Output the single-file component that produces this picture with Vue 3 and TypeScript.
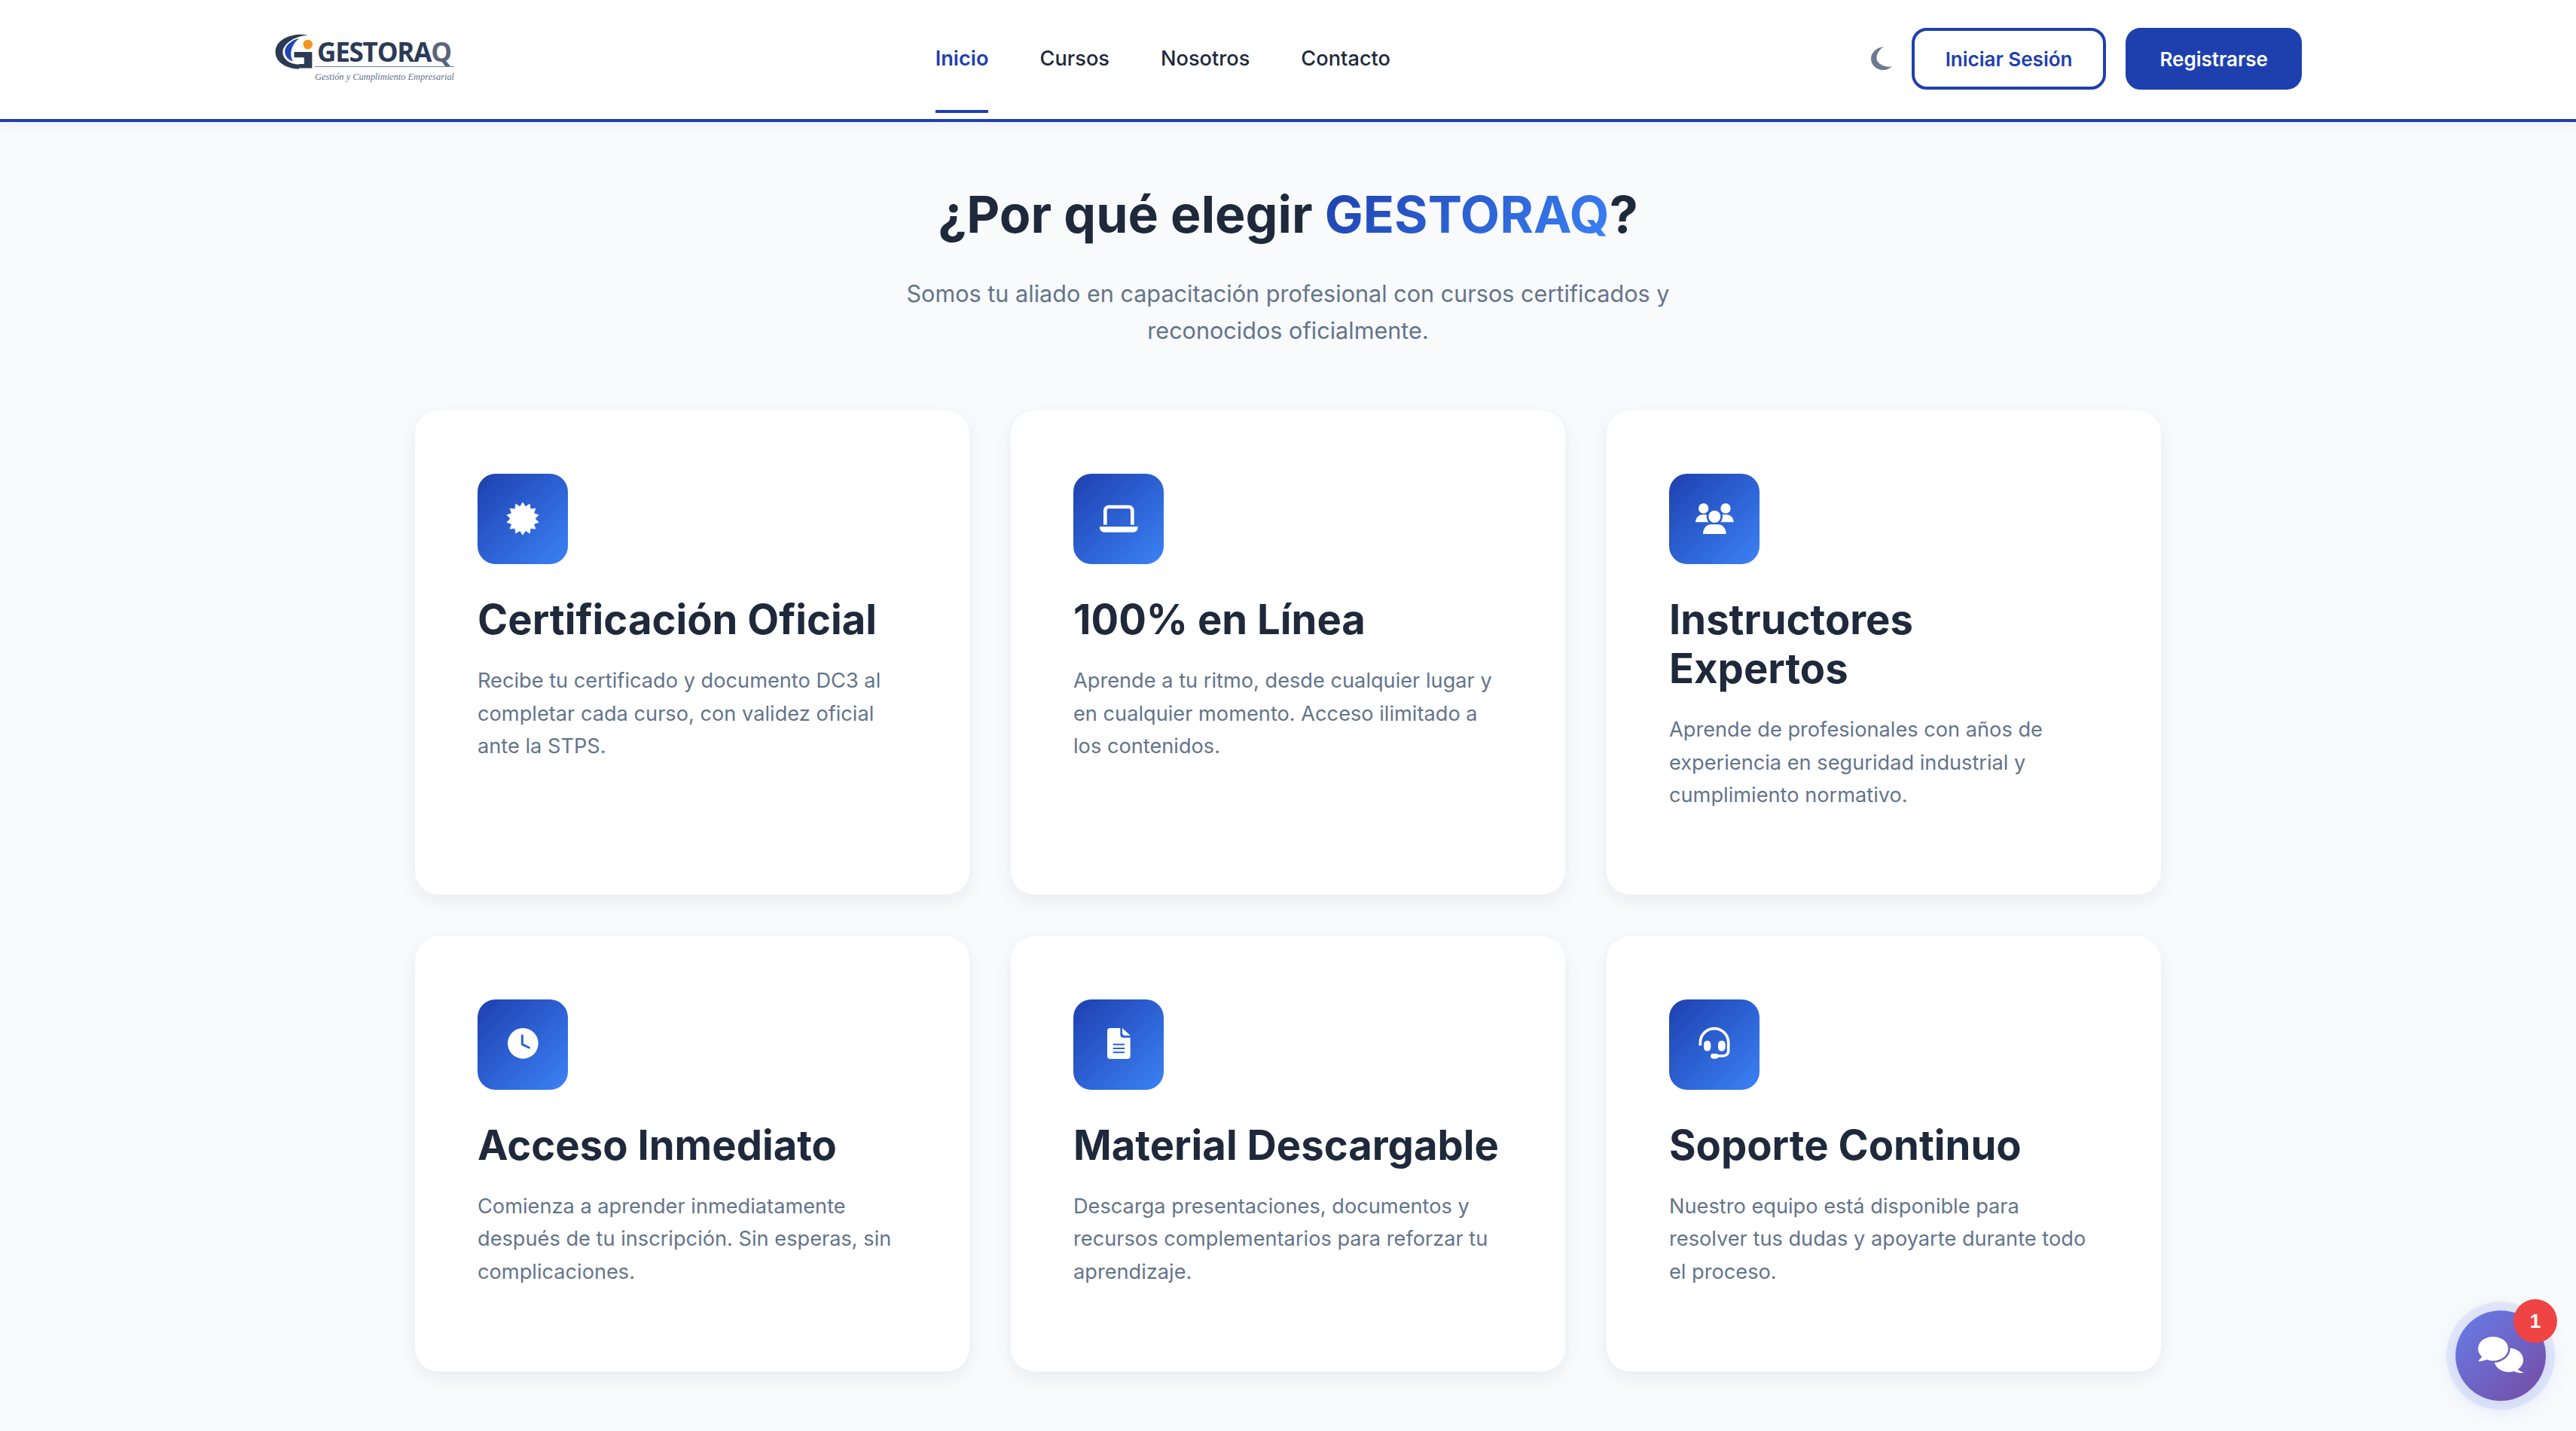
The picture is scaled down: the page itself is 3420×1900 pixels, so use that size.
<script setup lang="ts">
  type Feature = { icon: string; title: string; text: string };

  const links = ['Inicio', 'Cursos', 'Nosotros', 'Contacto'];

  const features: Feature[] = [
    {
      icon: 'certificate',
      title: 'Certificación Oficial',
      text: 'Recibe tu certificado y documento DC3 al completar cada curso, con validez oficial ante la STPS.',
    },
    {
      icon: 'laptop',
      title: '100% en Línea',
      text: 'Aprende a tu ritmo, desde cualquier lugar y en cualquier momento. Acceso ilimitado a los contenidos.',
    },
    {
      icon: 'users',
      title: 'Instructores Expertos',
      text: 'Aprende de profesionales con años de experiencia en seguridad industrial y cumplimiento normativo.',
    },
    {
      icon: 'clock',
      title: 'Acceso Inmediato',
      text: 'Comienza a aprender inmediatamente después de tu inscripción. Sin esperas, sin complicaciones.',
    },
    {
      icon: 'file',
      title: 'Material Descargable',
      text: 'Descarga presentaciones, documentos y recursos complementarios para reforzar tu aprendizaje.',
    },
    {
      icon: 'headset',
      title: 'Soporte Continuo',
      text: 'Nuestro equipo está disponible para resolver tus dudas y apoyarte durante todo el proceso.',
    },
  ];

  // seal outline for the certificate icon
  const sealPoints = Array.from({ length: 28 }, (_, i) => {
    const r = i % 2 === 0 ? 65 : 49;
    const a = (i * Math.PI) / 14 - Math.PI / 2;
    return `${(180 + r * Math.cos(a)).toFixed(1)},${(179 + r * Math.sin(a)).toFixed(1)}`;
  }).join(' ');
</script>

<template>
  <div class="page">
    <header class="header">
      <a class="logo">
        <svg class="logo-mark" viewBox="70 65 160 150" width="53" height="50">
          <path d="M205 72C150 62 75 85 75 140C75 185 125 208 170 208L170 190C130 190 100 165 105 135C110 105 150 78 205 72Z" fill="#2b3a55" />
          <path d="M170 85C135 95 105 120 115 150C120 165 130 172 145 178C130 150 135 115 170 85Z" fill="#1f46b5" />
          <path d="M150 140H222V205H170V188H190V162H150Z" fill="#2b3a55" />
          <circle cx="205" cy="110" r="19" fill="#f7941d" />
        </svg>
        <div class="logo-words">
          <div class="logo-name">GESTORA<span class="logo-q">Q</span></div>
          <div class="logo-tag">Gestión y Cumplimiento Empresarial</div>
        </div>
      </a>

      <nav class="nav">
        <a v-for="(link, i) in links" :key="link" class="nav-link" :class="{ active: i === 0 }">{{ link }}</a>
      </nav>

      <div class="actions">
        <svg class="moon" viewBox="0 0 28 32" width="28" height="32">
          <path d="M17 1C7 2 0 9 0 17C0 25 7 32 16 32C21 32 25 30 28 27C25 28 22 28 19 27C12 25 7 21 7.500 15C8 9 12 4 17 1Z" fill="#6b7a90" />
        </svg>
        <button class="btn btn-outline">Iniciar Sesión</button>
        <button class="btn btn-solid">Registrarse</button>
      </div>
    </header>

    <main class="features">
      <h2 class="title">¿Por qué elegir <span class="brand">GESTORAQ</span>?</h2>
      <p class="subtitle">Somos tu aliado en capacitación profesional con cursos certificados y reconocidos oficialmente.</p>

      <div class="grid">
        <article v-for="item in features" :key="item.title" class="card">
          <div class="card-icon">
            <svg viewBox="0 0 360 360" width="120" height="120">
              <polygon v-if="item.icon === 'certificate'" :points="sealPoints" fill="#fff" stroke="#fff" stroke-width="2" stroke-linejoin="round" />

              <g v-else-if="item.icon === 'laptop'">
                <path d="M127 203V146a14 14 0 0 1 14-14H221a14 14 0 0 1 14 14V203" fill="none" stroke="#fff" stroke-width="14" />
                <path d="M105 211H257V215a18 18 0 0 1-18 18H123a18 18 0 0 1-18-18Z" fill="#fff" />
              </g>

              <g v-else-if="item.icon === 'users'">
                <mask id="users-cut">
                  <rect width="360" height="360" fill="#fff" />
                  <circle cx="181" cy="171" r="32" fill="#000" />
                  <path d="M127 248V232c0-22 18-38 38-38H197c20 0 38 16 38 38v16Z" fill="#000" />
                </mask>
                <g mask="url(#users-cut)" fill="#fff">
                  <circle cx="137" cy="138" r="20" />
                  <circle cx="225" cy="138" r="20" />
                  <path d="M105 193c0-16 12-30 28-30h12c16 0 28 14 28 30Z" />
                  <path d="M189 193c0-16 12-30 28-30h12c16 0 28 14 28 30Z" />
                </g>
                <circle cx="181" cy="171" r="24" fill="#fff" />
                <path d="M135 240c0-22 14-38 32-38h28c18 0 32 16 32 38Z" fill="#fff" />
              </g>

              <g v-else-if="item.icon === 'clock'">
                <circle cx="181" cy="175" r="61" fill="#fff" />
                <path d="M178 144V179L205 192" fill="none" stroke="#2b62d6" stroke-width="9" stroke-linecap="round" stroke-linejoin="round" />
              </g>

              <g v-else-if="item.icon === 'file'">
                <path d="M147 114H187V140a12 12 0 0 0 12 12H227V225a12 12 0 0 1-12 12H147a12 12 0 0 1-12-12V126a12 12 0 0 1 12-12Z" fill="#fff" />
                <path d="M195 114L227 144H207a12 12 0 0 1-12-12Z" fill="#fff" />
                <path d="M158 179H204M158 195H204M158 211H204" stroke="#2b62d6" stroke-width="6" />
              </g>

              <g v-else-if="item.icon === 'headset'">
                <path d="M124 184V172a56 56 0 0 1 112 0V205a20 20 0 0 1-20 20H178" fill="none" stroke="#fff" stroke-width="11" />
                <rect x="138" y="164" width="28" height="42" rx="14" fill="#fff" />
                <rect x="195" y="164" width="29" height="42" rx="14" fill="#fff" />
                <rect x="165" y="216" width="32" height="20" rx="10" fill="#fff" />
              </g>
            </svg>
          </div>
          <h3 class="card-title">{{ item.title }}</h3>
          <p class="card-text">{{ item.text }}</p>
        </article>
      </div>
    </main>

    <button class="chat">
      <svg viewBox="0 0 360 360" width="120" height="120">
        <mask id="chat-cut">
          <rect width="360" height="360" fill="#fff" />
          <ellipse cx="150" cy="152" rx="68" ry="56" fill="#000" />
        </mask>
        <g mask="url(#chat-cut)" fill="#fff">
          <ellipse cx="212" cy="197" rx="58" ry="48" />
          <path d="M240 230L272 249C262 250 244 248 228 240Z" />
        </g>
        <ellipse cx="150" cy="152" rx="60" ry="48" fill="#fff" />
        <path d="M110 180L90 202C102 203 118 200 130 192Z" fill="#fff" />
      </svg>
      <span class="chat-badge">1</span>
    </button>
  </div>
</template>

<style scoped>
  .page {
    min-height: 1900px;
    background: #f8fafc;
    font-family: Inter, 'Liberation Sans', sans-serif;
    color: #1e293b;
  }

  .header {
    display: flex;
    align-items: center;
    justify-content: space-between;
    height: 158px;
    padding: 0 364px;
    background: #fff;
    border-bottom: 4px solid #1e40af;
    box-shadow: 0 4px 20px rgba(30, 41, 59, 0.05);
  }

  .logo {
    display: flex;
    align-items: flex-start;
    width: 240px;
    height: 70px;
    margin-top: -5px;
  }

  .logo-mark {
    flex: none;
    margin-top: 2px;
  }

  .logo-words {
    margin-left: 1px;
    white-space: nowrap;
  }

  .logo-name {
    padding: 12px 0 5px 3px;
    border-bottom: 1px solid #7583a0;
    font-family: 'Open Sans', sans-serif;
    font-size: 35px;
    line-height: 29px;
    font-weight: 700;
    letter-spacing: -1.200px;
    color: #2b3a55;
  }

  .logo-q {
    color: #596479;
  }

  .logo-tag {
    margin-top: 5px;
    font-family: 'Liberation Serif', serif;
    font-size: 12.400px;
    line-height: 16px;
    font-style: italic;
    color: #66708a;
  }

  .nav {
    display: flex;
    gap: 68px;
    margin-top: -2px;
  }

  .nav-link {
    position: relative;
    font-size: 27.200px;
    line-height: 34px;
    font-weight: 500;
    color: #1e293b;
  }

  .nav-link.active {
    color: #1e40af;
    font-weight: 600;
  }

  .nav-link.active::after {
    content: '';
    position: absolute;
    left: 0;
    right: 0;
    bottom: -55px;
    height: 4px;
    background: #1e40af;
  }

  .actions {
    display: flex;
    align-items: center;
    gap: 26px;
    margin-bottom: 2px;
  }

  .moon {
    margin-top: -3px;
  }

  .btn {
    height: 82px;
    padding: 0 41px;
    border: 4px solid #1e40af;
    border-radius: 20px;
    font-family: inherit;
    font-size: 26px;
    font-weight: 600;
  }

  .btn-outline {
    background: #fff;
    color: #1e40af;
  }

  .btn-solid {
    background: #1e40af;
    color: #fff;
  }

  .features {
    display: flex;
    flex-direction: column;
    align-items: center;
    padding-top: 82px;
  }

  .title {
    margin: 0;
    font-size: 68px;
    line-height: 80px;
    font-weight: 700;
  }

  .brand {
    background: linear-gradient(135deg, #1e40af, #3b82f6);
    -webkit-background-clip: text;
    background-clip: text;
    color: transparent;
  }

  .subtitle {
    max-width: 1040px;
    margin: 41px 0 0;
    font-size: 30.600px;
    line-height: 49px;
    text-align: center;
    color: #64748b;
  }

  .grid {
    display: grid;
    grid-template-columns: repeat(3, 736px);
    gap: 55px;
    margin-top: 82px;
  }

  .card {
    padding: 84px 84px 110px 83px;
    background: #fff;
    border-radius: 32px;
    box-shadow: 0 8px 24px rgba(30, 41, 59, 0.07);
  }

  .card-icon {
    width: 120px;
    height: 120px;
    border-radius: 24px;
    background: linear-gradient(135deg, #1e40af, #3b82f6);
  }

  .card-icon svg {
    display: block;
  }

  .card-title {
    margin: 41px 0 27px;
    font-size: 54.400px;
    line-height: 65px;
    font-weight: 700;
    color: #1e293b;
  }

  .card-text {
    margin: 0;
    font-size: 27.200px;
    line-height: 43.600px;
    color: #64748b;
  }

  .chat {
    position: fixed;
    left: 3260px;
    top: 1740px;
    width: 120px;
    height: 120px;
    padding: 0;
    border: none;
    border-radius: 50%;
    background: linear-gradient(135deg, #667eea, #764ba2);
    box-shadow: 0 0 0 12px rgba(102, 126, 234, 0.12), 0 5px 28px 4px rgba(102, 126, 234, 0.2);
  }

  .chat svg {
    display: block;
  }

  .chat-badge {
    position: absolute;
    top: -15px;
    right: -15px;
    width: 58px;
    height: 58px;
    border-radius: 50%;
    background: #ef4444;
    font-family: 'Liberation Sans', sans-serif;
    font-size: 26px;
    line-height: 58px;
    font-weight: 700;
    text-align: center;
    color: #fff;
  }
</style>

<style>
  html,
  body {
    overflow: hidden;
    height: 1900px;
  }
</style>
